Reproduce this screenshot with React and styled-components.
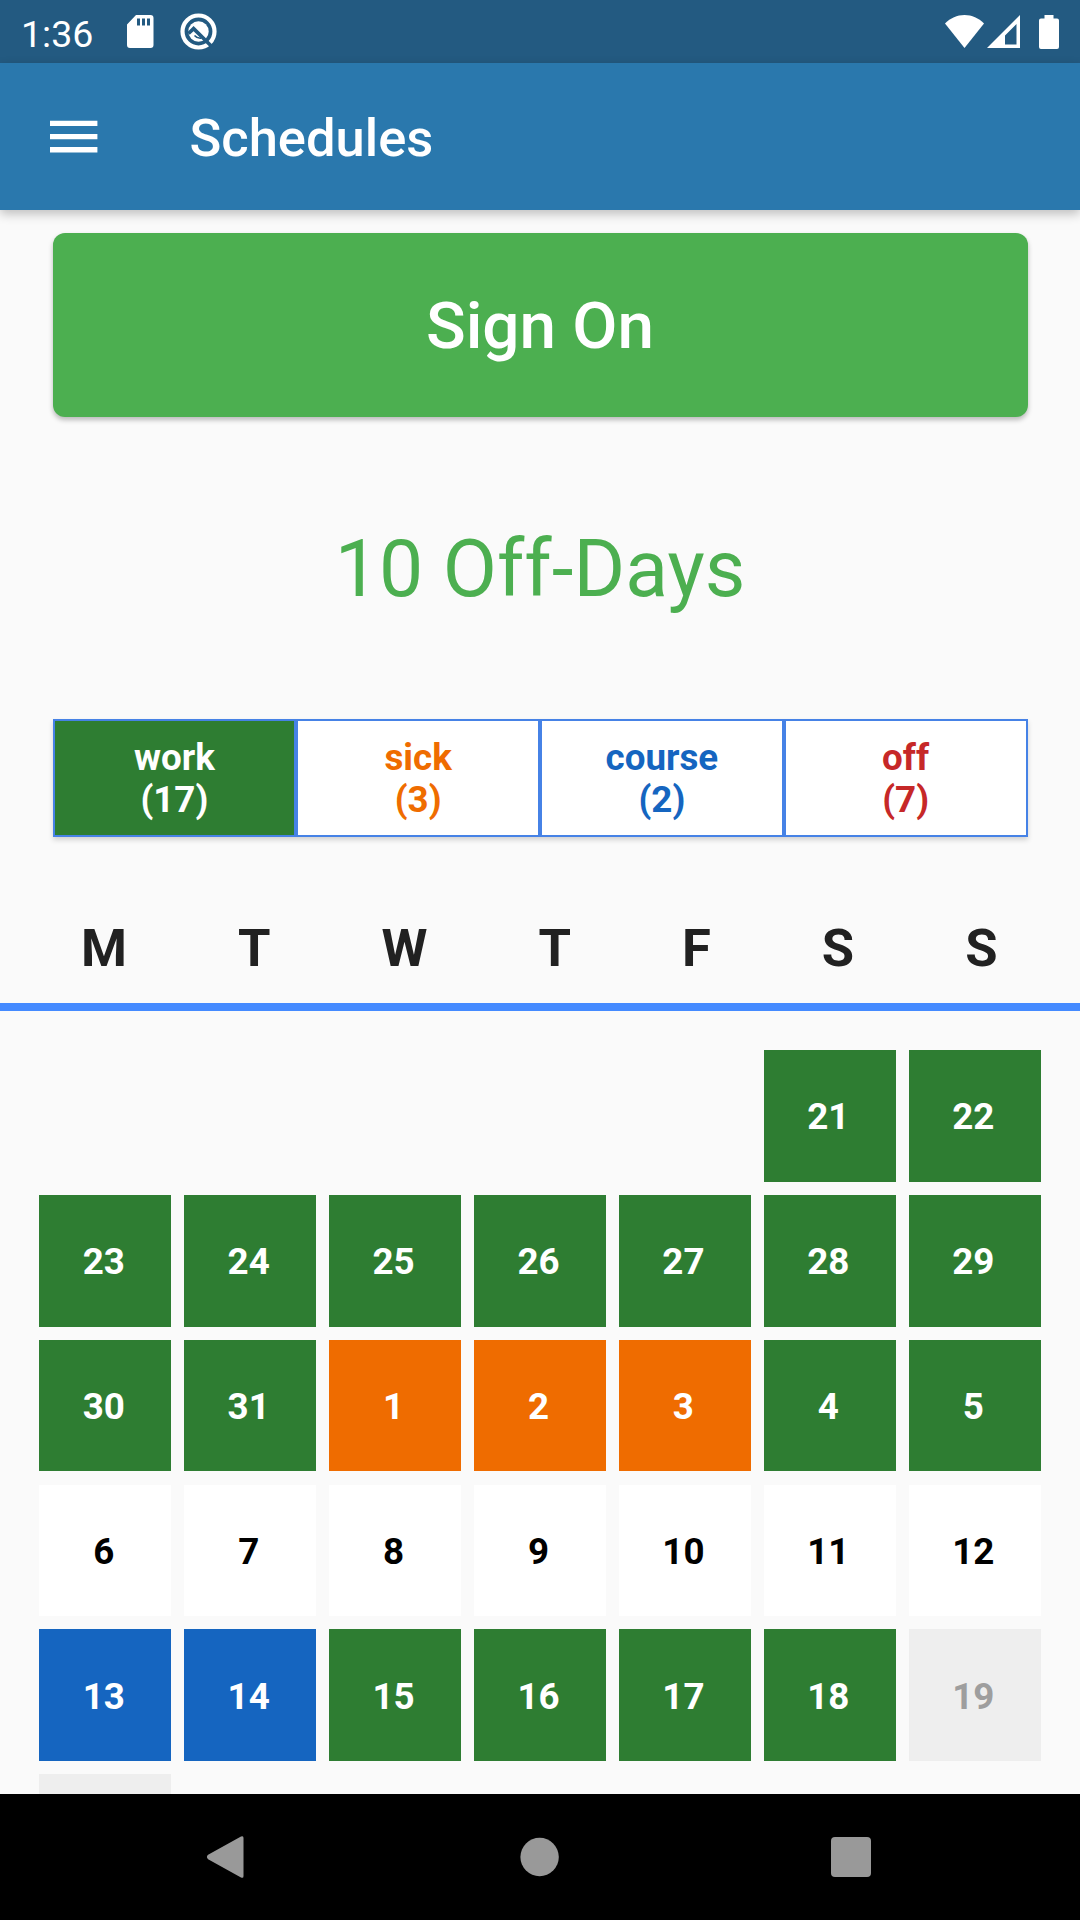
import React from 'react';
import styled, { createGlobalStyle } from 'styled-components';

const GlobalStyle = createGlobalStyle`
  * {
    box-sizing: border-box;
  }
  body {
    margin: 0;
    background: #fafafa;
    font-family: Roboto, 'Liberation Sans', sans-serif;
  }
`;

const COLORS = {
  work: '#2e7d32',
  sick: '#ef6c00',
  course: '#1565c0',
  off: '#c62828',
  accent: '#448aff',
};

const FILTERS = [
  { type: 'work', count: 17, active: true },
  { type: 'sick', count: 3 },
  { type: 'course', count: 2 },
  { type: 'off', count: 7 },
];

const WEEKDAYS = ['M', 'T', 'W', 'T', 'F', 'S', 'S'];

const range = (from, to, type) => Array.from({ length: to - from + 1 }, (_, i) => ({ day: from + i, type }));

// the period starts on a saturday, hence the five empty cells
const DAYS = [
  ...Array(5).fill({ type: 'empty' }),
  ...range(21, 31, 'work'),
  ...range(1, 3, 'sick'),
  ...range(4, 5, 'work'),
  ...range(6, 12, 'free'),
  ...range(13, 14, 'course'),
  ...range(15, 18, 'work'),
  ...range(19, 19, 'disabled'),
  { type: 'disabled' },
];

const cellBackground = ({ $type }) => {
  if ($type === 'empty') return 'transparent';
  if ($type === 'free') return '#fff';
  if ($type === 'disabled') return '#eee';
  return COLORS[$type];
};

const cellColor = ({ $type }) => {
  if ($type === 'free') return '#000';
  if ($type === 'disabled') return '#9e9e9e';
  return '#fff';
};

const StatusBar = () => (
  <StyledStatusBar>
    <Clock>1:36</Clock>
    <StatusIcons>
      <svg width="27" height="33" viewBox="0 0 27 33">
        <path
          fill="#fff"
          fillRule="evenodd"
          d="M9 0H23.500a3 3 0 0 1 3 3V30a3 3 0 0 1-3 3H3a3 3 0 0 1-3-3V9.500zM10 3.500V10.500H13V3.500zM15 3.500V10.500H18V3.500zM20 3.500V10.500H23V3.500z"
        />
      </svg>
      <svg width="37" height="37" viewBox="0 0 37 37" fill="none">
        <circle cx="18.500" cy="18.500" r="16" stroke="#fff" strokeWidth="4.200" />
        <circle cx="18.500" cy="18.500" r="10.200" fill="#fff" />
        <path d="M8.500 20.500L13.600 15.600L31.500 33.200" stroke="#235a81" strokeWidth="3.600" />
        <path d="M14.500 22.500Q17 25.500 21 25.200" stroke="#235a81" strokeWidth="1.600" />
      </svg>
    </StatusIcons>
    <SystemIcons>
      <svg width="39" height="33" viewBox="0 0 39 33">
        <path fill="#fff" d="M19.500 33L0 8.500C5.500 3 12 0 19.500 0S33.500 3 39 8.500z" />
      </svg>
      <svg width="33" height="33" viewBox="0 0 33 33">
        <path fill="#fff" fillRule="evenodd" d="M33 0V33H0zM29.500 9L18 20.500V29.500H29.500z" />
      </svg>
      <Battery width="20" height="34" viewBox="0 0 20 34">
        <path fill="#fff" d="M5.500 0H14.500V3.500H18a2 2 0 0 1 2 2V32a2 2 0 0 1-2 2H2a2 2 0 0 1-2-2V5.500a2 2 0 0 1 2-2H5.500z" />
      </Battery>
    </SystemIcons>
  </StyledStatusBar>
);

const NavigationBar = () => (
  <StyledNavigationBar>
    <svg width="40" height="44" viewBox="0 0 40 44">
      <path fill="#999" d="M35 1.600Q37.500 .2 37.500 3V41Q37.500 43.800 35 42.400L2.100 24.200Q-.3 22 2.100 19.800z" />
    </svg>
    <svg width="40" height="40" viewBox="0 0 40 40">
      <circle cx="20.600" cy="20" r="19.200" fill="#999" />
    </svg>
    <svg width="40" height="40" viewBox="0 0 40 40">
      <rect width="40" height="40" rx="4" fill="#999" />
    </svg>
  </StyledNavigationBar>
);

const App = () => {
  return (
    <Screen>
      <GlobalStyle />
      <StatusBar />
      <AppBar>
        <MenuButton aria-label="Menu">
          <svg width="48" height="33" viewBox="0 0 48 33">
            <path fill="#fff" d="M0 .7H47.400V6.100H0zM0 13.900H47.400V19.300H0zM0 27.100H47.400V32.500H0z" />
          </svg>
        </MenuButton>
        <Title>Schedules</Title>
      </AppBar>
      <Content>
        <SignOnButton>Sign On</SignOnButton>
        <OffDays>10 Off-Days</OffDays>
        <Filters>
          {FILTERS.map(({ type, count, active }) => (
            <Filter key={type} $type={type} $active={active}>
              <span>{type}</span>
              <span>({count})</span>
            </Filter>
          ))}
        </Filters>
        <Weekdays>
          {WEEKDAYS.map((name, i) => (
            <span key={i}>{name}</span>
          ))}
        </Weekdays>
        <Calendar>
          {DAYS.map(({ day, type }, i) => (
            <DayCell key={i} $type={type}>
              {day}
            </DayCell>
          ))}
        </Calendar>
      </Content>
      <NavigationBar />
    </Screen>
  );
};

const Screen = styled.div`
  display: flex;
  flex-direction: column;
  width: 1080px;
  height: 1920px;
  overflow: hidden;
  background: #fafafa;
`;

const StyledStatusBar = styled.header`
  display: flex;
  flex: none;
  align-items: center;
  height: 63px;
  padding: 0 21px 0 21px;
  background: #235a81;
  color: #fff;
`;

const Clock = styled.span`
  width: 106px;
  padding-top: 4px;
  font-size: 37.5px;
  line-height: 44px;
`;

const StatusIcons = styled.div`
  display: flex;
  align-items: center;
  gap: 26px;
`;

const SystemIcons = styled.div`
  display: flex;
  align-items: center;
  gap: 3px;
  margin-left: auto;
`;

const Battery = styled.svg`
  margin-left: 16px;
`;

const AppBar = styled.div`
  display: flex;
  flex: none;
  align-items: center;
  height: 147px;
  padding-left: 49.5px;
  background: #2a78ad;
  box-shadow: 0 4px 10px rgba(0, 0, 0, 0.24);
  z-index: 1;
`;

const MenuButton = styled.button`
  display: flex;
  width: 140px;
  padding: 0;
  border: 0;
  background: none;
`;

const Title = styled.h1`
  margin: 0;
  padding-top: 2px;
  color: #fff;
  font-size: 52.5px;
  font-weight: 500;
`;

const Content = styled.main`
  display: flex;
  flex: 1;
  flex-direction: column;
  min-height: 0;
  overflow: hidden;
`;

const SignOnButton = styled.button`
  flex: none;
  height: 184px;
  margin: 23.4px 52.5px 0;
  border: 0;
  border-radius: 12px;
  background: #4caf50;
  box-shadow: 0 3px 5px rgba(0, 0, 0, 0.26);
  color: #fff;
  font-family: inherit;
  font-size: 65.6px;
  font-weight: 500;
`;

const OffDays = styled.div`
  display: flex;
  flex: none;
  align-items: center;
  justify-content: center;
  height: 301.6px;
  padding-top: 2px;
  color: #4caf50;
  font-size: 78.75px;
`;

const Filters = styled.div`
  display: flex;
  flex: none;
  height: 118px;
  margin: 0 52.5px;
  box-shadow: 0 3px 5px rgba(0, 0, 0, 0.16);
`;

const Filter = styled.button`
  display: flex;
  flex: 1;
  flex-direction: column;
  align-items: center;
  justify-content: center;
  padding: 2px 0 0;
  border: 2.625px solid #4682e6;
  background: ${({ $active, $type }) => ($active ? COLORS[$type] : '#fff')};
  color: ${({ $active, $type }) => ($active ? '#fff' : COLORS[$type])};
  font-family: inherit;
  font-size: 36.75px;
  font-weight: 700;
  line-height: 42px;
`;

const Weekdays = styled.div`
  display: flex;
  flex: none;
  align-items: center;
  justify-content: space-around;
  height: 173.6px;
  padding: 56px 27px 0 25.5px;
  border-bottom: 8px solid ${COLORS.accent};
  color: #212121;
  font-size: 52.5px;
  font-weight: 700;
`;

const Calendar = styled.div`
  display: grid;
  flex: none;
  grid-template-columns: repeat(7, 1fr);
  grid-auto-rows: 131.8px;
  gap: 13.1px 13.125px;
  padding: 39.3px 39.375px 0;
`;

const DayCell = styled.div`
  display: flex;
  align-items: center;
  justify-content: center;
  padding: 2px 3px 0 0;
  background: ${cellBackground};
  color: ${cellColor};
  font-size: 36.75px;
  font-weight: 700;
`;

const StyledNavigationBar = styled.nav`
  display: flex;
  flex: none;
  align-items: center;
  justify-content: space-between;
  height: 126px;
  padding: 0 209px 0 206px;
  background: #000;
`;

export default App;
